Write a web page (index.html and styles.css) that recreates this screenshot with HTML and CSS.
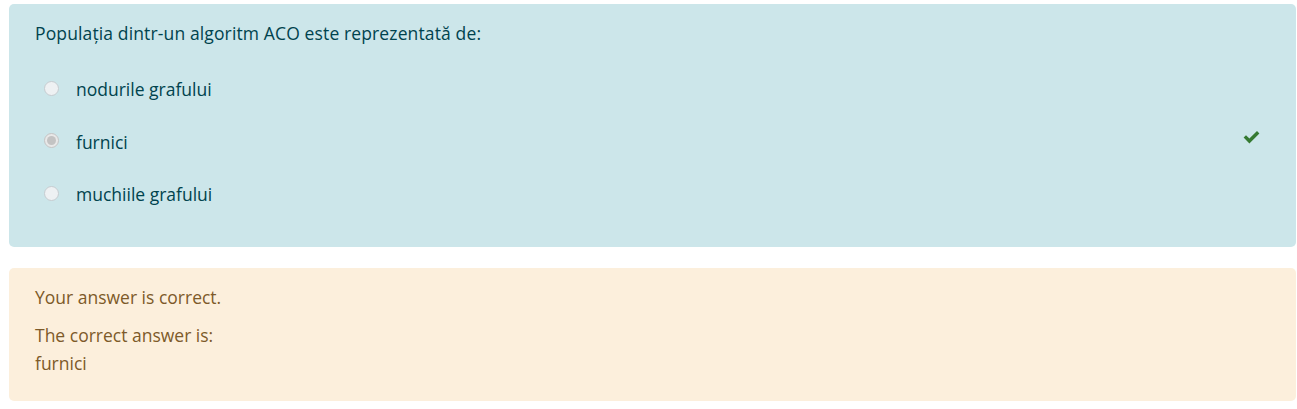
FILE: index.html
```html
<!DOCTYPE html>
<html lang="ro">
<head>
<meta charset="utf-8">
<title>Question</title>
<link rel="stylesheet" href="styles.css">
</head>
<body>
<div class="que">
  <div class="formulation">
    <div class="qtext">Populația dintr-un algoritm ACO este reprezentată de:</div>
    <div class="answer">
      <div class="opt">
        <span class="radio"></span>
        <span class="label">nodurile grafului</span>
      </div>
      <div class="opt">
        <span class="radio checked"></span>
        <span class="label">furnici</span>
        <svg class="check" viewBox="0 0 17 13" width="17" height="13" aria-hidden="true">
          <path d="M0.6 6.6 L3 4.2 L6.4 7.6 L14 0 L16.4 2.4 L6.4 12.4 Z" fill="#357a32"/>
        </svg>
      </div>
      <div class="opt">
        <span class="radio"></span>
        <span class="label">muchiile grafului</span>
      </div>
    </div>
  </div>
  <div class="outcome">
    <p class="fb">Your answer is correct.</p>
    <p class="fb">The correct answer is:<br>furnici</p>
  </div>
</div>
</body>
</html>
```

FILE: styles.css
```css
html, body {
  margin: 0;
  background: #ffffff;
}
body {
  padding: 4px 1px 0 9px;
  font-family: "Open Sans", "Noto Sans", sans-serif;
  font-size: 17.5px;
  line-height: 28px;
}
.que {
  display: flex;
  flex-direction: column;
  gap: 21px;
}
.formulation {
  background: #cce6ea;
  color: #00434e;
  border-radius: 5px;
  padding: 15px 36px 39px 26px;
  display: flex;
  flex-direction: column;
  gap: 28px;
}
.qtext {
  letter-spacing: 0.13px;
}
.answer {
  display: flex;
  flex-direction: column;
  gap: 24.5px;
}
.opt {
  display: flex;
  align-items: center;
  height: 28px;
}
.radio {
  box-sizing: border-box;
  width: 15px;
  height: 15px;
  border-radius: 50%;
  border: 1px solid #c6ccd0;
  background: #eef1f3;
  margin: 0 17px 0 9px;
  position: relative;
  top: -1px;
  display: flex;
  align-items: center;
  justify-content: center;
}
.radio.checked {
  background: #e8e8e8;
  border-color: #c4c4c4;
}
.radio.checked::after {
  content: "";
  width: 9px;
  height: 9px;
  border-radius: 50%;
  background: #c3c3c3;
}
.label {
  flex: 1;
}
.check {
  display: block;
  position: relative;
  top: -4px;
}
.outcome {
  background: #fcefdc;
  color: #7d5a29;
  border-radius: 5px;
  padding: 15px 26px 24px 26px;
}
.fb {
  margin: 0;
}
.fb + .fb {
  margin-top: 10px;
}
```
